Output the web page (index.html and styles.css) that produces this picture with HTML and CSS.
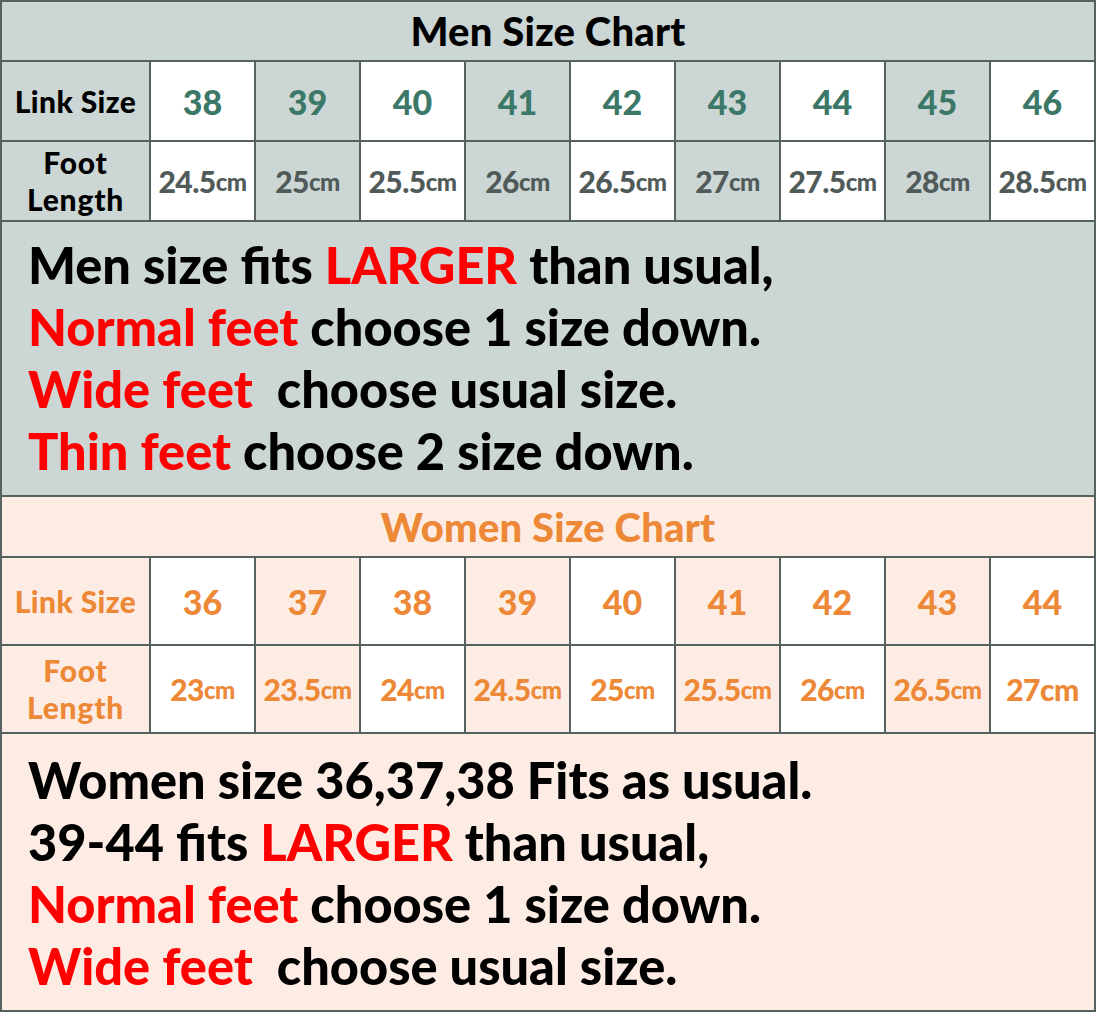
FILE: index.html
```html
<!DOCTYPE html>
<html>
<head>
<meta charset="utf-8">
<link rel="stylesheet" href="styles.css">
</head>
<body>
<div class="chart">
  <div class="title men-title">Men Size Chart</div>

  <div class="cell label grey">Link Size</div>
  <div class="cell num teal white">38</div>
  <div class="cell num teal grey">39</div>
  <div class="cell num teal white">40</div>
  <div class="cell num teal grey">41</div>
  <div class="cell num teal white">42</div>
  <div class="cell num teal grey">43</div>
  <div class="cell num teal white">44</div>
  <div class="cell num teal grey">45</div>
  <div class="cell num teal white">46</div>

  <div class="cell label two grey">Foot<br>Length</div>
  <div class="cell len slate white">24.5<span class="cm">cm</span></div>
  <div class="cell len slate grey">25<span class="cm">cm</span></div>
  <div class="cell len slate white">25.5<span class="cm">cm</span></div>
  <div class="cell len slate grey">26<span class="cm">cm</span></div>
  <div class="cell len slate white">26.5<span class="cm">cm</span></div>
  <div class="cell len slate grey">27<span class="cm">cm</span></div>
  <div class="cell len slate white">27.5<span class="cm">cm</span></div>
  <div class="cell len slate grey">28<span class="cm">cm</span></div>
  <div class="cell len slate white">28.5<span class="cm">cm</span></div>

  <div class="notes men-notes">
    <p>Men size fits <span class="red">LARGER</span> than usual,</p>
    <p><span class="red">Normal feet</span> choose 1 size down.</p>
    <p><span class="red">Wide feet</span>&nbsp; choose usual size.</p>
    <p><span class="red">Thin feet</span> choose 2 size down.</p>
  </div>

  <div class="title women-title">Women Size Chart</div>

  <div class="cell label orange peach">Link Size</div>
  <div class="cell num orange white">36</div>
  <div class="cell num orange peach">37</div>
  <div class="cell num orange white">38</div>
  <div class="cell num orange peach">39</div>
  <div class="cell num orange white">40</div>
  <div class="cell num orange peach">41</div>
  <div class="cell num orange white">42</div>
  <div class="cell num orange peach">43</div>
  <div class="cell num orange white">44</div>

  <div class="cell label two orange peach">Foot<br>Length</div>
  <div class="cell len orange white">23<span class="cm">cm</span></div>
  <div class="cell len orange peach">23.5<span class="cm">cm</span></div>
  <div class="cell len orange white">24<span class="cm">cm</span></div>
  <div class="cell len orange peach">24.5<span class="cm">cm</span></div>
  <div class="cell len orange white">25<span class="cm">cm</span></div>
  <div class="cell len orange peach">25.5<span class="cm">cm</span></div>
  <div class="cell len orange white">26<span class="cm">cm</span></div>
  <div class="cell len orange peach">26.5<span class="cm">cm</span></div>
  <div class="cell len orange white">27cm</div>

  <div class="notes women-notes">
    <p>Women size 36,37,38 Fits as usual.</p>
    <p>39-44 fits <span class="red">LARGER</span> than usual,</p>
    <p><span class="red">Normal feet</span> choose 1 size down.</p>
    <p><span class="red">Wide feet</span>&nbsp; choose usual size.</p>
  </div>
</div>
</body>
</html>
```

FILE: styles.css
```css
html, body {
  margin: 0;
  padding: 0;
  background: #ffffff;
}

.chart {
  width: 1096px;
  height: 1012px;
  box-sizing: border-box;
  padding: 2px;
  background: #56625f;
  display: grid;
  grid-template-columns: 147px repeat(9, 103px);
  grid-template-rows: 58px 78px 78px 273px 59px 86px 86px 276px;
  gap: 2px;
  font-family: "Lato", "Open Sans", sans-serif;
  font-weight: 900;
  color: #000;
}

.title {
  grid-column: 1 / -1;
  display: flex;
  align-items: center;
  justify-content: center;
  font-size: 40px;
  letter-spacing: 0.2px;
}

.men-title {
  background: #ccd6d5;
  color: #000;
}

.women-title {
  background: #fdece3;
  color: #ec8836;
}

.cell {
  display: flex;
  align-items: center;
  justify-content: center;
  text-align: center;
  white-space: nowrap;
}

.label {
  font-size: 30px;
  letter-spacing: 0.4px;
}

.label.two {
  line-height: 37px;
  letter-spacing: 0.8px;
}

.num {
  font-size: 34px;
}

.len {
  font-size: 30px;
  letter-spacing: -0.5px;
}

.cm {
  font-size: 24px;
  letter-spacing: -0.5px;
}

.white { background: #ffffff; }
.grey { background: #ccd6d5; }
.peach { background: #fdece3; }

.teal { color: #3b7868; }
.slate { color: #505b59; }
.orange { color: #ec8836; }
.red { color: #ff0000; }

.notes {
  grid-column: 1 / -1;
  font-size: 50.5px;
  line-height: 62px;
  padding-left: 26px;
  box-sizing: border-box;
}

.notes p {
  margin: 0;
  white-space: nowrap;
}

.men-notes {
  background: #ccd6d5;
  padding-top: 12px;
}

.women-notes {
  background: #fdece3;
  padding-top: 15px;
}
```
